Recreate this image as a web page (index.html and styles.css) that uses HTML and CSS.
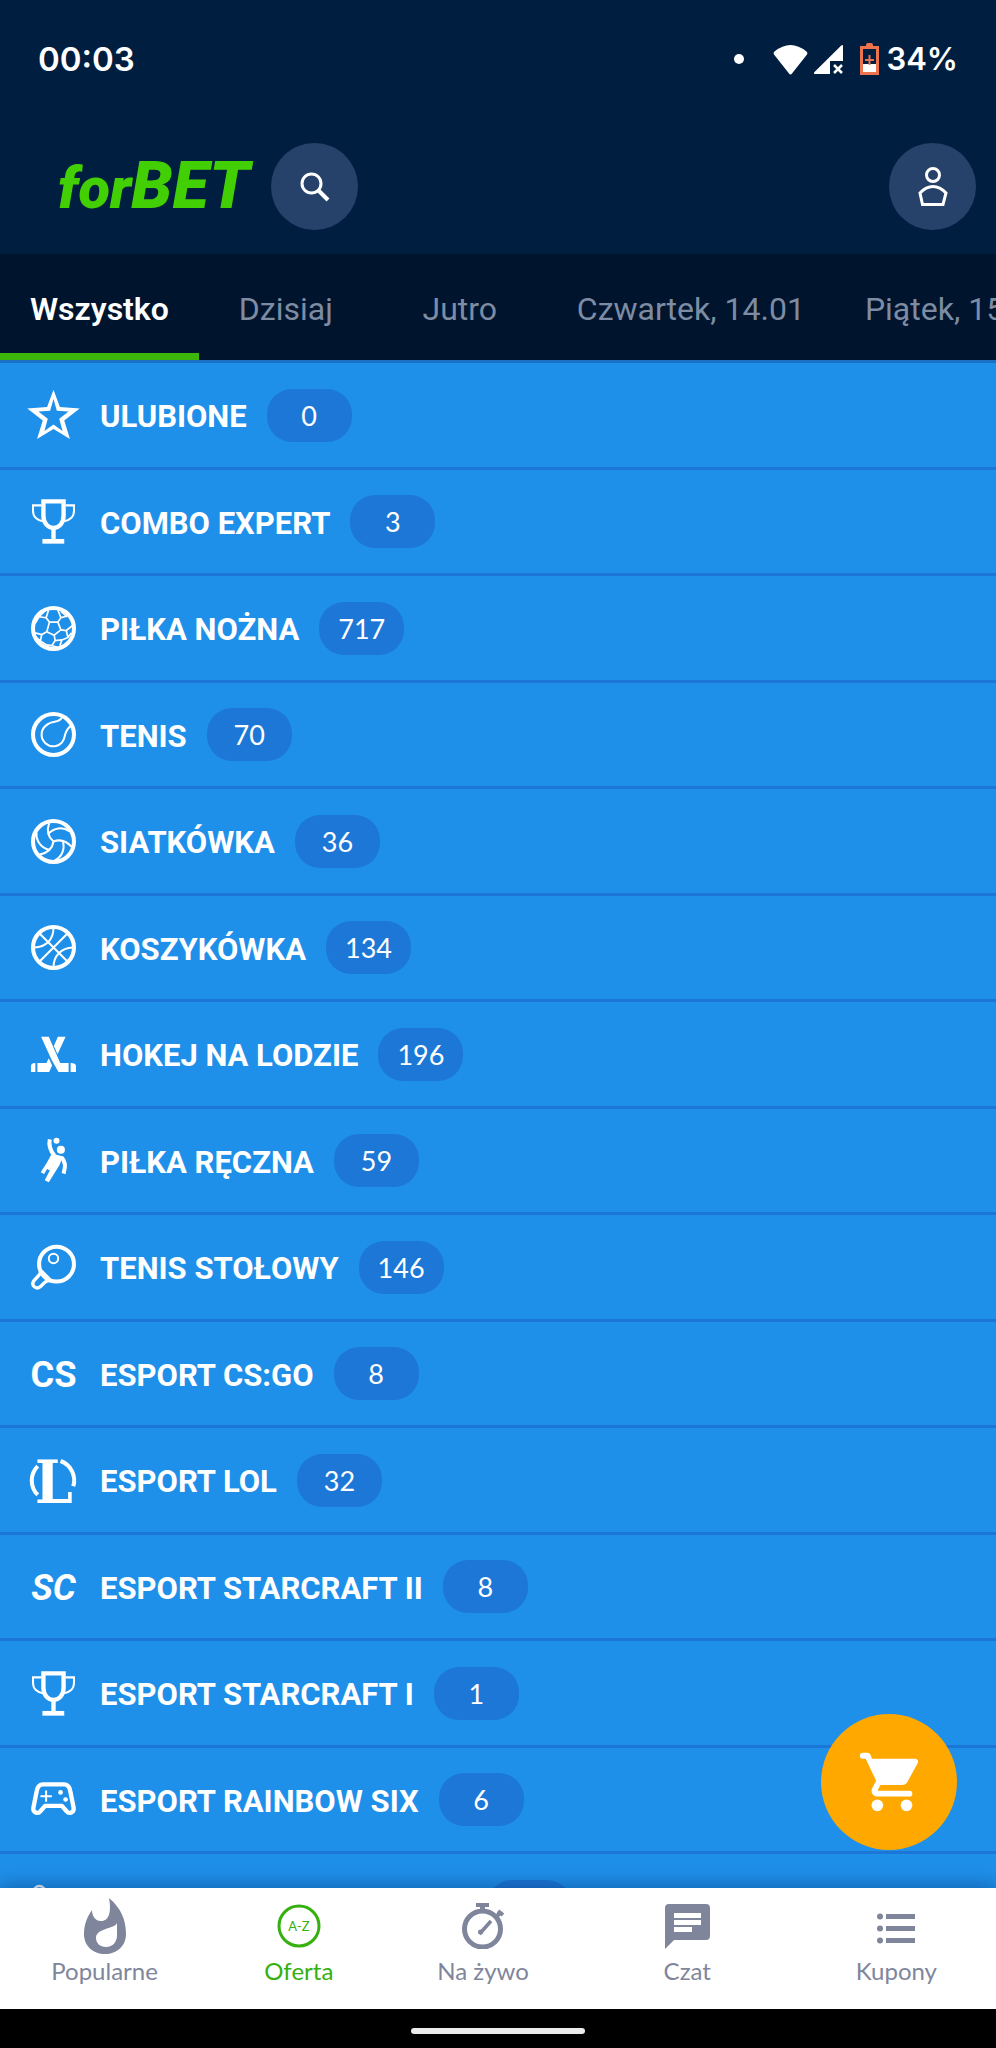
FILE: index.html
```html
<!DOCTYPE html>
<html lang="pl">
<head>
<meta charset="utf-8">
<meta name="viewport" content="width=device-width, initial-scale=1">
<title>forBET</title>
<link rel="stylesheet" href="styles.css">
</head>
<body>
<svg class="defs" aria-hidden="true">
  <symbol id="trophy" viewBox="0 0 134 134">
    <path d="M37 7H97V50C97 72 83 86 67 86S37 72 37 50Z" fill="none" stroke="currentColor" stroke-width="13"/>
    <path d="M67 86V122" stroke="currentColor" stroke-width="13"/>
    <path d="M34 119H99V133H34Z" fill="currentColor"/>
    <path d="M31 19H6V36C6 52 18 64 38 67M103 19H128V36C128 52 116 64 96 67" fill="none" stroke="currentColor" stroke-width="6"/>
  </symbol>
</svg>

<header class="top">
  <div class="status">
    <time class="clock clock-time">00:03</time>
    <span class="dot"></span>
    <svg class="wifi" viewBox="0 0 35 31" aria-hidden="true"><path d="M1.500 7.500Q17.500-5.500 33.500 7.500Q35 9 34 10.500L19 29.500Q17.500 31.500 16 29.500L1 10.500Q0 9 1.500 7.500Z" fill="#fff"/></svg>
    <svg class="signal" viewBox="0 0 29 29" aria-hidden="true"><path d="M29 1V16H16V29H1Q-1 29 .5 27L27 .8Q29-.8 29 1Z" fill="#fff"/><path d="M20 20L28 28M28 20L20 28" stroke="#fff" stroke-width="2.500"/></svg>
    <svg class="battery" viewBox="0 0 19 32" aria-hidden="true"><path d="M6 3V2Q6 0 8 0H11Q13 0 13 2V3" fill="#ee7450"/><path d="M1.500 4.500H17.500V30.500H1.500Z" fill="none" stroke="#ee7450" stroke-width="3"/><path d="M3 21H16V29H3Z" fill="#fff"/><path d="M9.500 12V22M5 17H14" stroke="#ee7450" stroke-width="2"/></svg>
    <span class="clock">34%</span>
  </div>
  <div class="brandbar">
    <a class="logo" href="#"><span class="logo-for">for</span><span class="logo-bet">BET</span></a>
    <button class="round" aria-label="Szukaj"><svg width="30" height="30" viewBox="0 0 30 30" fill="none" stroke="#fff"><circle cx="11.500" cy="11.500" r="9.500" stroke-width="3"/><path d="M18 18L28 28" stroke-width="4"/></svg></button>
    <button class="round account" aria-label="Konto"><svg width="30" height="40" viewBox="0 0 30 40" fill="none" stroke="#fff" stroke-width="3"><circle cx="15" cy="8" r="6.500"/><path d="M2 26Q8 19.500 15 19.500T28 26L25 37.500H4.500Z"/></svg></button>
  </div>
</header>

<nav class="tabs" aria-label="Dni">
  <button class="tab tab-on">Wszystko</button>
  <button class="tab">Dzisiaj</button>
  <button class="tab">Jutro</button>
  <button class="tab">Czwartek, 14.01</button>
  <button class="tab">Piątek, 15.01</button>
</nav>

<main class="offer">
  <ul class="sports">
    <li><button class="row">
      <svg class="ico" viewBox="0 0 134 134"><path fill="currentColor" fill-rule="evenodd" d="M67-10L86 42L145 46L99 82L116 137L67 107L18 137L35 82L-11 46L48 42ZM67 18L57 53L22 55L50 77L40 113L67 94L94 113L84 77L112 55L77 53Z"/></svg>
      <span class="name">ULUBIONE</span><span class="count">0</span></button></li>
    <li><button class="row">
      <svg class="ico"><use href="#trophy"/></svg>
      <span class="name">COMBO EXPERT</span><span class="count">3</span></button></li>
    <li><button class="row">
      <svg class="ico" viewBox="0 0 134 134" fill="none" stroke="currentColor"><circle cx="67" cy="67" r="61" stroke-width="12"/><path stroke-width="5" d="M55 48H80L89 71L69 87L47 77ZM55 48L45 35L52 13M45 35L24 32M24 32L40 16M80 48L89 35L80 12M89 35L106 30M89 16L106 30L108 20M89 71L105 73L124 58M105 73L110 94L92 101L72 103L69 87M92 101L86 118M110 94L120 80M72 103L62 118M62 118L80 124M47 77L32 85L12 80M32 85L28 104M28 104L14 92M28 104L46 116L62 118M24 32L12 52"/></svg>
      <span class="name">PIŁKA NOŻNA</span><span class="count">717</span></button></li>
    <li><button class="row">
      <svg class="ico" viewBox="0 0 134 134" fill="none" stroke="currentColor"><circle cx="67" cy="67" r="61" stroke-width="12"/><path stroke-width="6" d="M92 16C86 32 66 26 52 35C28 48 26 76 42 92C62 110 90 102 98 80C104 62 102 54 118 42"/></svg>
      <span class="name">TENIS</span><span class="count">70</span></button></li>
    <li><button class="row">
      <svg class="ico" viewBox="0 0 134 134" fill="none" stroke="currentColor" stroke-width="6"><circle cx="67" cy="67" r="61" stroke-width="12"/><g id="seam"><path d="M67 67C52 55 46 36 54 12M52 44C68 26 94 22 114 36"/></g><use href="#seam" transform="rotate(120 67 67)"/><use href="#seam" transform="rotate(240 67 67)"/></svg>
      <span class="name">SIATKÓWKA</span><span class="count">36</span></button></li>
    <li><button class="row">
      <svg class="ico" viewBox="0 0 134 134" fill="none" stroke="currentColor" stroke-width="6"><circle cx="67" cy="67" r="61" stroke-width="12"/><path d="M24 24L110 110M110 24L24 110M67 8C67 44 44 66 10 67M67 126C67 92 90 68 124 67"/></svg>
      <span class="name">KOSZYKÓWKA</span><span class="count">134</span></button></li>
    <li><button class="row">
      <svg class="ico" viewBox="0 0 134 134" fill="currentColor"><path d="M30 14H53L87 92H112V119H82L62 84ZM80 14H103L79 66L68 42ZM19 92H46L53 78L63 100L54 119H19ZM0 119V101Q0 92 13 92V119ZM118 92Q134 92 134 101V119H118Z"/></svg>
      <span class="name">HOKEJ NA LODZIE</span><span class="count">196</span></button></li>
    <li><button class="row">
      <svg class="ico" viewBox="0 0 134 134" fill="currentColor"><circle cx="76" cy="8" r="9"/><circle cx="89" cy="35" r="12"/><path d="M62 46L96 55L84 82L53 132L41 126L56 97L48 92L39 107L29 102L48 72Z"/><path d="M56 4C52 22 56 36 70 52M91 58C104 70 104 84 97 106" fill="none" stroke="currentColor" stroke-width="12"/></svg>
      <span class="name">PIŁKA RĘCZNA</span><span class="count">59</span></button></li>
    <li><button class="row">
      <svg class="ico" viewBox="0 0 134 134" fill="none" stroke="currentColor"><circle cx="76" cy="57" r="52" stroke-width="12"/><circle cx="67" cy="40" r="14" stroke-width="6"/><path d="M29 78Q28 88 20 94L9 106C-1 120 14 134 28 124L40 112Q48 104 58 106" stroke-width="10"/><path d="M32 76L62 106" stroke-width="6"/></svg>
      <span class="name">TENIS STOŁOWY</span><span class="count">146</span></button></li>
    <li><button class="row">
      <svg class="ico mark" viewBox="0 0 134 134"><text x="67" y="106" font-size="108">CS</text></svg>
      <span class="name">ESPORT CS:GO</span><span class="count">8</span></button></li>
    <li><button class="row">
      <svg class="ico mark" viewBox="0 0 134 134"><path d="M20 24A61 61 0 0 0 20 110M88 9A61 61 0 0 1 126 84" fill="none" stroke="currentColor" stroke-width="12"/><text class="serif" x="68" y="133" font-size="178">L</text></svg>
      <span class="name">ESPORT LOL</span><span class="count">32</span></button></li>
    <li><button class="row">
      <svg class="ico mark" viewBox="0 0 134 134"><text class="slant" x="67" y="106" font-size="108">SC</text></svg>
      <span class="name">ESPORT STARCRAFT II</span><span class="count">8</span></button></li>
    <li><button class="row">
      <svg class="ico"><use href="#trophy"/></svg>
      <span class="name">ESPORT STARCRAFT I</span><span class="count">1</span></button></li>
    <li><button class="row">
      <svg class="ico" viewBox="0 0 134 134" fill="none" stroke="currentColor"><path stroke-width="13" stroke-linejoin="round" d="M36 22H98C110 22 115 30 117 42L127 92C129 108 112 110 106 102L92 86H42L28 102C22 110 5 108 7 92L17 42C19 30 24 22 36 22Z"/><path stroke-width="6" d="M45 40V74M28 57H62"/><g fill="currentColor" stroke="none"><circle cx="88" cy="46" r="7"/><circle cx="103" cy="67" r="7"/></g></svg>
      <span class="name">ESPORT RAINBOW SIX</span><span class="count">6</span></button></li>
    <li><button class="row" aria-label="Esport">
      <svg class="ico" viewBox="0 0 134 134" fill="none" stroke="currentColor"><circle cx="25" cy="24" r="18" stroke-width="7"/><path d="M62 28H92" stroke-width="8"/></svg>
      <span class="name name-blank"></span><span class="count"></span></button></li>
  </ul>
  <button class="cart" aria-label="Koszyk"><svg width="70" height="70" viewBox="-1 0 24 24" fill="#fff"><path d="M2 2H3.600Q4.300 2 4.600 2.600L5.210 4H20Q21.300 4.200 20.880 5.480L17.300 11.970C16.960 12.590 16.300 13 15.550 13H8.100L7.200 14.630Q7 15 7.420 15H18A1 1 0 0 1 18 17H7C5.480 17 4.520 15.370 5.250 14.040L6.600 11.600L3 4H2A1 1 0 0 1 2 2Z"/><circle cx="7" cy="20" r="2"/><circle cx="17" cy="20" r="2"/></svg></button>
</main>

<nav class="bottom" aria-label="Menu">
  <a class="item" href="#"><span class="pic"><svg width="42" height="56" viewBox="0 0 42 56" fill="currentColor"><path fill-rule="evenodd" d="M25 0C37 10 42 22 42 36C42 48 33 56 21 56S0 48 0 36C0 27 3 19 8 12C8 18 11 23 17 23C24 23 28 16 25 0ZM33 25C31 31 12 30 12 40C12 45 16 49 22 49C29 49 33 44 33 37Z"/></svg></span>Popularne</a>
  <a class="item item-on" href="#"><span class="pic"><svg width="44" height="44" viewBox="0 0 44 44"><circle cx="22" cy="22" r="20" fill="none" stroke="currentColor" stroke-width="3"/><text class="az" x="22" y="27">A-Z</text></svg></span>Oferta</a>
  <a class="item" href="#"><span class="pic"><svg width="44" height="46" viewBox="0 0 44 46" fill="none" stroke="currentColor"><circle cx="21.500" cy="26" r="18" stroke-width="5"/><path d="M15 2H28" stroke-width="4"/><path d="M21.500 2V8" stroke-width="5"/><path d="M37 8L42 12M36 13L40 9" stroke-width="4"/><path d="M30 18L18.500 31" stroke-width="3.500"/><circle cx="19.500" cy="29" r="1.500" stroke-width="2"/></svg></span>Na żywo</a>
  <a class="item" href="#"><span class="pic"><svg width="45" height="45" viewBox="0 0 45 45" fill="currentColor"><path fill-rule="evenodd" d="M4 0H41Q45 0 45 4V32Q45 36 41 36H9L0 45V4Q0 0 4 0ZM9 9V14H36V9ZM9 16V21H36V16ZM9 23V28H27V23Z"/></svg></span>Czat</a>
  <a class="item" href="#"><span class="pic pic-list"><svg width="38" height="31" viewBox="0 0 38 31" fill="currentColor"><circle cx="3" cy="3.500" r="3"/><circle cx="3" cy="15.500" r="3"/><circle cx="3" cy="27.500" r="3"/><path d="M9 1H38V6H9ZM9 13H38V18H9ZM9 25H38V30H9Z"/></svg></span>Kupony</a>
</nav>
<div class="gesture"><span class="pill"></span></div>
</body>
</html>
```
FILE: styles.css
```css
* { box-sizing: border-box; }

body {
  margin: 0;
  height: 100vh;
  display: flex;
  flex-direction: column;
  overflow: hidden;
  background: #001e40;
  font-family: Roboto, "Liberation Sans", sans-serif;
  color: #fff;
}

button {
  margin: 0;
  padding: 0;
  border: 0;
  background: none;
  color: inherit;
  font: inherit;
  cursor: pointer;
}

a { color: inherit; text-decoration: none; }

svg { flex: none; }

.defs { position: absolute; width: 0; height: 0; }

/* Status bar and brand */
.top { flex: none; padding-bottom: 24px; }

.status {
  display: flex;
  align-items: center;
  height: 118px;
  padding: 0 38px;
}

.clock { font: 600 31px/40px Inter, sans-serif; }
.clock-time { font-size: 33px; }

.dot {
  width: 10px;
  height: 10px;
  margin: 0 29px 0 auto;
  border-radius: 50%;
  background: #fff;
}

.wifi { width: 35px; height: 31px; margin-right: 6px; }
.signal { width: 29px; height: 29px; margin-right: 17px; }
.battery { width: 19px; height: 32px; margin-right: 7px; }

.brandbar {
  display: flex;
  align-items: center;
  margin-top: 25px;
  padding: 0 20px 0 58px;
  gap: 16px;
}

.logo {
  display: flex;
  align-items: baseline;
  width: 197px;
  color: #42d004;
  font-weight: 900;
  font-style: italic;
  line-height: 80px;
}

.logo-for { font-size: 58px; }
.logo-bet { font-size: 66px; }

.round {
  display: grid;
  place-items: center;
  width: 87px;
  height: 87px;
  border-radius: 50%;
  background: #26426b;
}

.account { margin-left: auto; }

/* Day tabs */
.tabs {
  flex: none;
  display: flex;
  height: 106px;
  overflow: hidden;
  background: #00142e;
}

.tab {
  flex: none;
  min-width: 174px;
  padding: 10px 30px 0;
  border-bottom: 7px solid transparent;
  font-size: 32px;
  font-weight: 400;
  color: #7d8ca3;
  white-space: nowrap;
}

.tab-on {
  border-color: #3cb60a;
  font-weight: 600;
  color: #fff;
}

/* Sports list */
.offer {
  position: relative;
  flex: 1;
  min-height: 0;
  background: #1f90ea;
}

.sports {
  height: 100%;
  margin: 0;
  padding: 0;
  border-top: 3px solid #1b6fc4;
  list-style: none;
  overflow: hidden;
}

.row {
  display: flex;
  align-items: center;
  width: 100%;
  height: 107px;
  padding: 0 31px;
  border-bottom: 3px solid #1c76d6;
  text-align: left;
}

li:nth-child(even) .row { height: 106px; }

.ico {
  width: 45px;
  height: 45px;
  margin-right: 24px;
  overflow: visible;
}

.mark text {
  fill: currentColor;
  font-family: Roboto, sans-serif;
  font-weight: 700;
  text-anchor: middle;
}

.mark .serif { font-family: "DejaVu Serif Condensed", "DejaVu Serif", serif; }
.mark .slant { font-style: italic; }

.name {
  padding-top: 4px;
  font-size: 31px;
  font-weight: 700;
  line-height: 40px;
  white-space: nowrap;
}

.name-blank { width: 367px; }

.count {
  width: 85px;
  height: 53px;
  margin-left: 20px;
  border-radius: 25px;
  background: #1d77d6;
  font: 400 27px/53px Lato, sans-serif;
  text-align: center;
}

.cart {
  position: absolute;
  right: 39px;
  bottom: 38px;
  z-index: 2;
  display: grid;
  place-items: center;
  width: 136px;
  height: 136px;
  border-radius: 50%;
  background: #ffa800;
}

/* Bottom navigation */
.bottom {
  position: relative;
  flex: none;
  display: grid;
  grid-template-columns: 21fr 18fr 19fr 22fr 20fr;
  height: 121px;
  padding-top: 8px;
  background: #fff;
  box-shadow: 0 0 20px 2px rgba(0, 50, 110, 0.5);
  color: #7f869c;
}

.item {
  display: flex;
  flex-direction: column;
  align-items: center;
  font: 400 24px/30px Lato, sans-serif;
}

.item-on { color: #36b00f; }

.pic {
  display: grid;
  place-items: center;
  height: 60px;
}

.pic-list { padding-top: 4px; }

.az {
  fill: currentColor;
  font: 400 13px Lato, sans-serif;
  text-anchor: middle;
}

.gesture {
  position: relative;
  flex: none;
  display: grid;
  place-items: center;
  height: 39px;
  padding-top: 4px;
  background: #000;
}

.pill {
  width: 174px;
  height: 6px;
  border-radius: 3px;
  background: #ececec;
}
```
